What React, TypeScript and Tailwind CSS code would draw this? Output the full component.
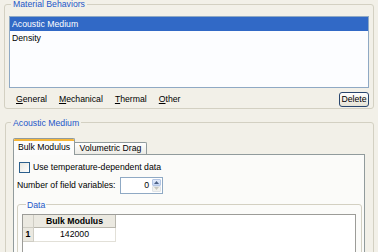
import React from "react";

const Mn = ({ c, rest }: { c: string; rest: string }) => (
  <span>
    <span className="underline underline-offset-[1px]">{c}</span>
    {rest}
  </span>
);

export default function App() {
  return (
    <div className="w-[378px] h-[252px] overflow-hidden bg-[#f2f0e8] font-['Liberation_Sans',Arial,sans-serif] text-[8.7px] text-black leading-none">
      {/* Material Behaviors group */}
      <div className="relative mt-[4px] mx-[4px] h-[105px] border border-[#d3d0c2] rounded-[3px] px-[4px] pt-[11px]">
        <span className="absolute left-[6px] -top-[6px] px-[2px] bg-[#f2f0e8] leading-[10px] text-[#2457c8]">
          Material Behaviors
        </span>
        <div className="h-[72px] border border-[#8fa9c4] bg-[#fcfdff]">
          <div className="h-[14px] bg-[#3169c6] text-white pl-[2px] flex items-center">Acoustic Medium</div>
          <div className="h-[14px] pl-[2px] flex items-center">Density</div>
        </div>
        <div className="h-[20px] pt-[3px] flex items-center">
          <div className="flex gap-[12px] pl-[7px] flex-1">
            <Mn c="G" rest="eneral" />
            <Mn c="M" rest="echanical" />
            <Mn c="T" rest="hermal" />
            <Mn c="O" rest="ther" />
          </div>
          <button className="h-[15px] w-[30px] border border-[#29466e] rounded-[3px] bg-gradient-to-b from-white to-[#e6e3d6] text-[8.7px] leading-none flex items-center justify-center">
            Delete
          </button>
        </div>
      </div>

      {/* Acoustic Medium group */}
      <div className="relative mt-[13px] ml-[5px] mr-[4px] h-[140px] border border-[#d3d0c2] rounded-[3px] pl-[7px] pr-[8px] pt-[15px]">
        <span className="absolute left-[5px] -top-[5px] px-[2px] bg-[#f2f0e8] leading-[10px] text-[#2457c8]">
          Acoustic Medium
        </span>
        {/* tabs */}
        <div className="flex items-end h-[16px]">
          <div className="relative z-10 -mb-[1px] h-[17px] w-[62px] border border-b-0 border-[#919b9c] rounded-t-[2px] bg-[#fcfcfb] flex flex-col">
            <div className="h-[2px] bg-[#f6b637] rounded-t-[1px]" />
            <div className="flex-1 flex items-center justify-center pb-[1px]">Bulk Modulus</div>
          </div>
          <div className="h-[12px] w-[72px] border border-b-0 border-l-0 border-[#919b9c] rounded-tr-[2px] bg-gradient-to-b from-white to-[#ecebe5] flex items-center justify-center">
            Volumetric Drag
          </div>
        </div>
        {/* tab panel */}
        <div className="h-[110px] border border-[#919b9c] bg-[#fbfbf9] pl-[3px] pr-[2px] pt-[7px]">
          <div className="flex items-center gap-[3px] ml-[2px] h-[11px]">
            <div className="w-[11px] h-[11px] border border-[#2b5f8c] bg-gradient-to-br from-[#e6e6df] to-white" />
            <span>Use temperature-dependent data</span>
          </div>
          <div className="flex items-center mt-[4px] h-[17px]">
            <span className="w-[103px]">Number of field variables:</span>
            <div className="w-[43px] h-[17px] border border-[#8fa9c4] bg-white flex">
              <div className="flex-1 flex items-center justify-end pr-[3px]">0</div>
              <div className="w-[10px] flex flex-col py-[1px] pr-[1px]">
                <div className="flex-1 border border-[#b4c6e4] rounded-[1px] bg-gradient-to-b from-[#e3ecfb] to-[#c5d6f5] flex items-center justify-center">
                  <svg width="5" height="3" viewBox="0 0 5 3"><path d="M0 3 L2.5 0 L5 3 Z" fill="#4d6185" /></svg>
                </div>
                <div className="flex-1 border border-[#dfe3e8] rounded-[1px] bg-[#f2f2ee] flex items-center justify-center">
                  <svg width="5" height="3" viewBox="0 0 5 3"><path d="M0 0 L2.5 3 L5 0 Z" fill="#c8c8c0" /></svg>
                </div>
              </div>
            </div>
          </div>
          {/* Data group */}
          <div className="relative mt-[10px] h-[60px] border border-[#d3d0c2] rounded-[3px] pl-[4px] pr-[5px] pt-[9px]">
            <span className="absolute left-[8px] -top-[5px] px-[1px] bg-[#fbfbf9] leading-[10px] text-[#2457c8]">Data</span>
            <div className="h-[50px] border border-[#9c9c98] bg-white">
              <div className="flex h-[13px]">
                <div className="w-[11px] bg-[#ebe9e1] border-r border-b border-[#cfcdc4]" />
                <div className="w-[82px] bg-[#ebe9e1] border-r border-b border-[#b9b7ae] font-bold flex items-center justify-center">
                  Bulk Modulus
                </div>
              </div>
              <div className="flex h-[14px]">
                <div className="w-[11px] bg-[#ebe9e1] border-r border-b border-[#cfcdc4] font-bold flex items-center justify-center">1</div>
                <div className="w-[82px] border-r border-b border-[#e2e0d8] flex items-center justify-center">142000</div>
              </div>
            </div>
          </div>
        </div>
      </div>
    </div>
  );
}
